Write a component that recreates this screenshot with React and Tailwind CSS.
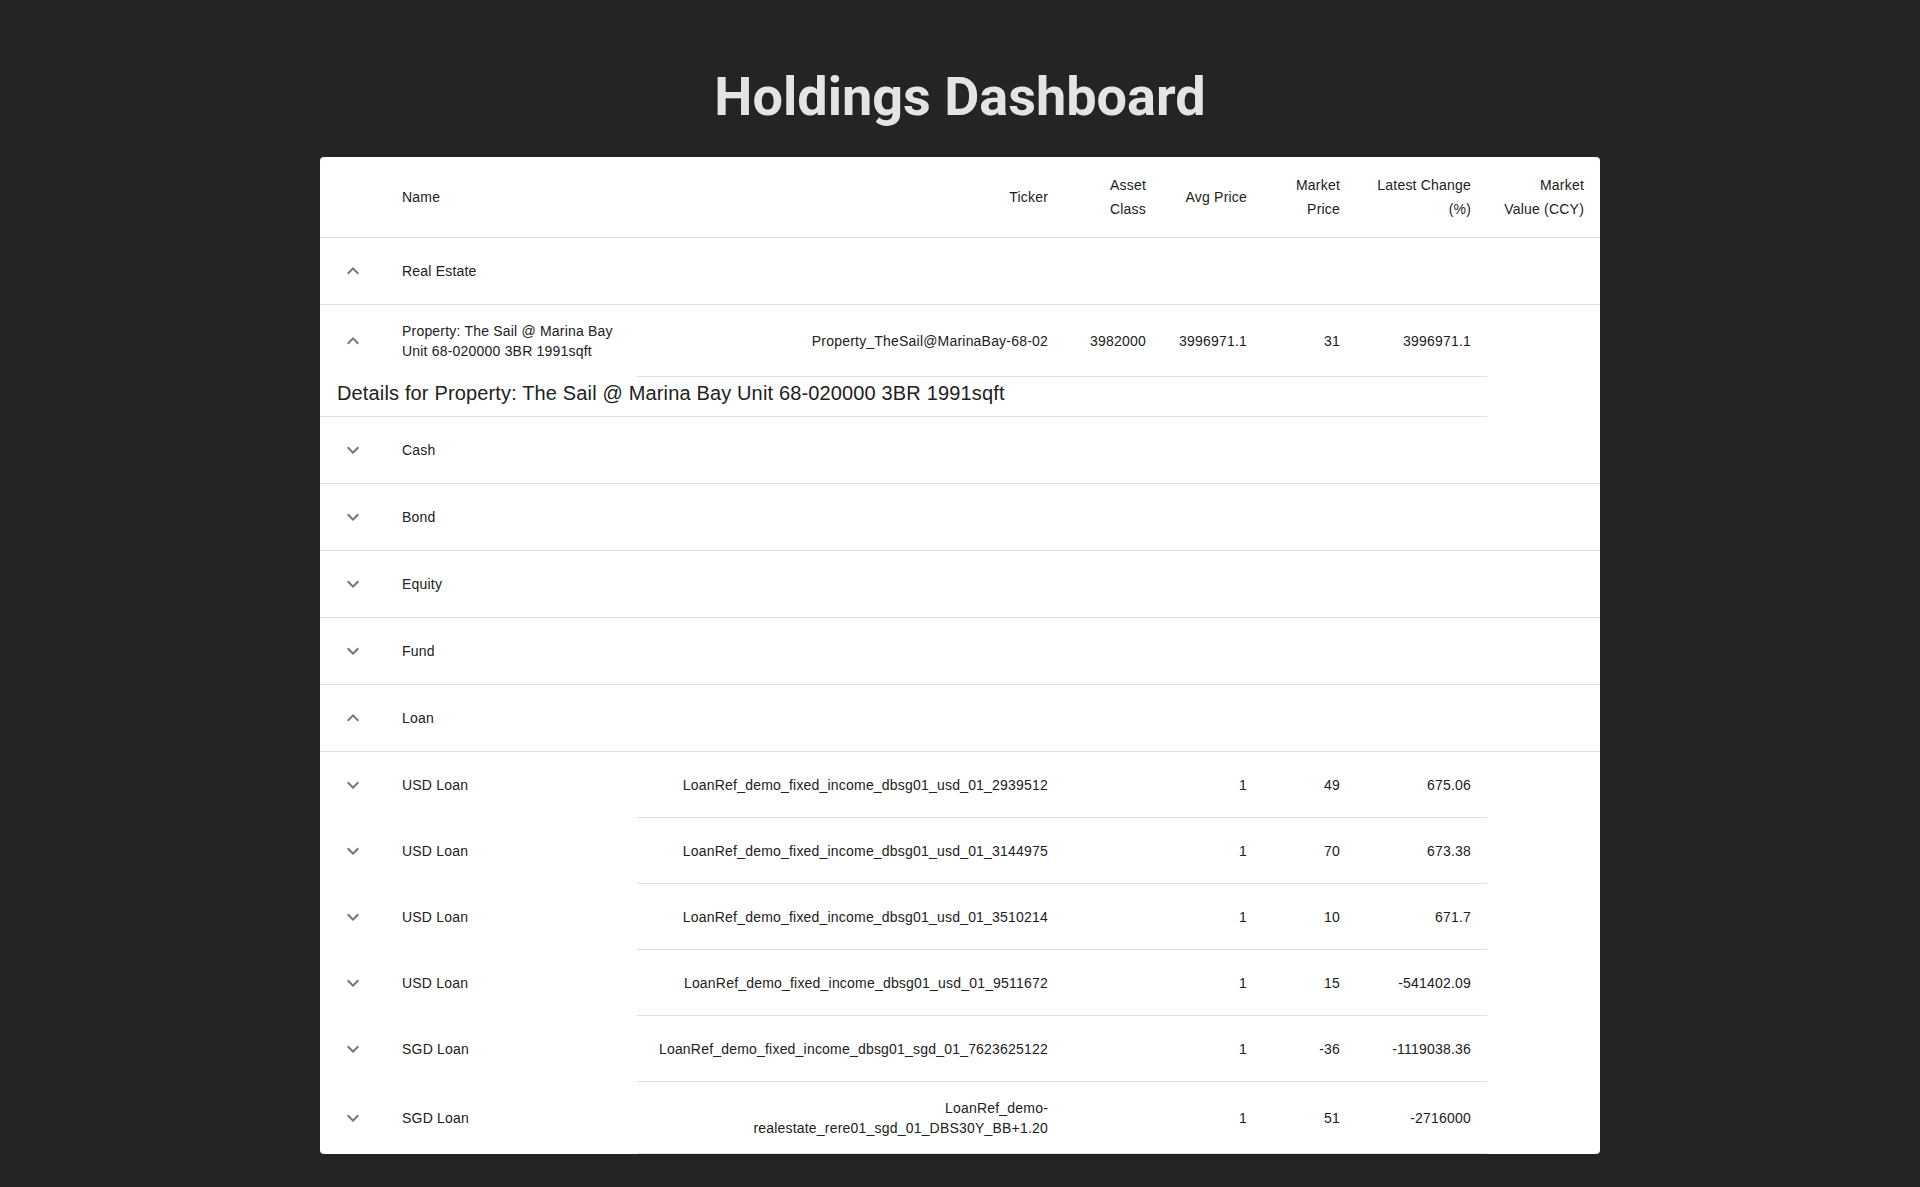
import React from 'react'

const cols = ['w-[66px]', 'w-[251px]', 'w-[427px]', 'w-[98px]', 'w-[101px]', 'w-[93px]', 'w-[131px]', 'w-[113px]']

const headers = ['', 'Name', 'Ticker', 'Asset Class', 'Avg Price', 'Market Price', 'Latest Change (%)', 'Market Value (CCY)']

const loans = [
  { name: 'USD Loan', ticker: 'LoanRef_demo_fixed_income_dbsg01_usd_01_2939512', avg: '1', price: '49', change: '675.06' },
  { name: 'USD Loan', ticker: 'LoanRef_demo_fixed_income_dbsg01_usd_01_3144975', avg: '1', price: '70', change: '673.38' },
  { name: 'USD Loan', ticker: 'LoanRef_demo_fixed_income_dbsg01_usd_01_3510214', avg: '1', price: '10', change: '671.7' },
  { name: 'USD Loan', ticker: 'LoanRef_demo_fixed_income_dbsg01_usd_01_9511672', avg: '1', price: '15', change: '-541402.09' },
  { name: 'SGD Loan', ticker: 'LoanRef_demo_fixed_income_dbsg01_sgd_01_7623625122', avg: '1', price: '-36', change: '-1119038.36' },
  { name: 'SGD Loan', ticker: 'LoanRef_demo-realestate_rere01_sgd_01_DBS30Y_BB+1.20', avg: '1', price: '51', change: '-2716000', tall: true }
]

function Chevron({ up }) {
  return (
    <svg viewBox="0 0 24 24" className="w-6 h-6 fill-[#757575]">
      {up ? (
        <path d="M7.41 15.41 12 10.83l4.59 4.58L18 14l-6-6-6 6z" />
      ) : (
        <path d="M7.41 8.59 12 13.17l4.59-4.58L18 10l-6 6-6-6z" />
      )}
    </svg>
  )
}

function CategoryRow({ label, open }) {
  return (
    <div className="flex h-[67px] border-b border-[#e0e0e0]">
      <div className={`${cols[0]} flex items-center justify-center`}>
        <Chevron up={open} />
      </div>
      <div className="flex items-center px-4">{label}</div>
    </div>
  )
}

function ItemRow({ open, name, ticker, assetClass, avg, price, change, tall }) {
  const h = tall ? 'h-[72px]' : 'h-[66px]'
  const cell = `${h} flex items-center justify-end text-right px-4 border-b border-[#e0e0e0]`
  return (
    <div className="flex">
      <div className={`${cols[0]} ${h} flex items-center justify-center`}>
        <Chevron up={open} />
      </div>
      <div className={`${cols[1]} ${h} flex items-center px-4`}>{name}</div>
      <div className={`${cols[2]} ${cell}`}>{ticker}</div>
      <div className={`${cols[3]} ${cell}`}>{assetClass}</div>
      <div className={`${cols[4]} ${cell}`}>{avg}</div>
      <div className={`${cols[5]} ${cell}`}>{price}</div>
      <div className={`${cols[6]} ${cell}`}>{change}</div>
      <div className={`${cols[7]} ${h}`}></div>
    </div>
  )
}

export default function App() {
  return (
    <div className="min-h-screen bg-[#242424] pt-[70px] pb-[33px]">
      <h1 className="text-center text-[54px] leading-[54px] font-bold text-[#e4e4e4] font-['Roboto',sans-serif] mb-[33px]">
        Holdings Dashboard
      </h1>

      <div className="w-[1280px] mx-auto bg-white rounded-[4px] overflow-hidden text-[14px] leading-5 tracking-[0.2px] text-[#212121] font-['Liberation_Sans',Arial,sans-serif]">
        {/* Header */}
        <div className="flex h-[81px] border-b border-[#e0e0e0] leading-6">
          {headers.map((title, i) => (
            <div
              key={i}
              className={`${cols[i]} flex items-center px-4 ${i > 1 ? 'justify-end text-right' : ''}`}
            >
              {title}
            </div>
          ))}
        </div>

        {/* Real Estate */}
        <CategoryRow label="Real Estate" open />
        <ItemRow
          open
          tall
          name="Property: The Sail @ Marina Bay Unit 68-020000 3BR 1991sqft"
          ticker="Property_TheSail@MarinaBay-68-02"
          assetClass="3982000"
          avg="3996971.1"
          price="31"
          change="3996971.1"
        />
        <div className="flex">
          <div className="w-[1167px] h-[40px] flex items-center pl-[17px] pb-[8px] border-b border-[#e0e0e0] text-[20px] leading-8 tracking-[0.0075em]">
            Details for Property: The Sail @ Marina Bay Unit 68-020000 3BR 1991sqft
          </div>
          <div className="w-[113px]"></div>
        </div>

        <CategoryRow label="Cash" />
        <CategoryRow label="Bond" />
        <CategoryRow label="Equity" />
        <CategoryRow label="Fund" />
        <CategoryRow label="Loan" open />

        {loans.map((loan, i) => (
          <ItemRow key={i} {...loan} />
        ))}
      </div>
    </div>
  )
}
